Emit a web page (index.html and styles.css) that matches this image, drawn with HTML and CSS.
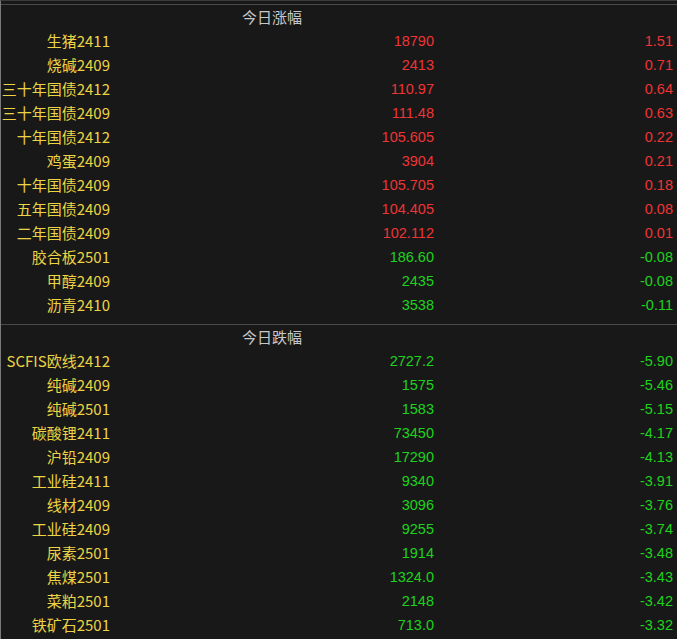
FILE: index.html
```html
<!DOCTYPE html>
<html lang="zh-CN">
<head>
    <meta charset="UTF-8">
    <title>今日涨跌幅</title>
    <link rel="stylesheet" href="styles.css">
</head>
<body>
    <div class="board">
        <div class="section">
            <div class="section-title">今日涨幅</div>
            <div class="row up"><span class="name"><span>生猪2411</span></span><span class="price">18790</span><span class="change">1.51</span></div>
            <div class="row up"><span class="name"><span>烧碱2409</span></span><span class="price">2413</span><span class="change">0.71</span></div>
            <div class="row up"><span class="name"><span>三十年国债2412</span></span><span class="price">110.97</span><span class="change">0.64</span></div>
            <div class="row up"><span class="name"><span>三十年国债2409</span></span><span class="price">111.48</span><span class="change">0.63</span></div>
            <div class="row up"><span class="name"><span>十年国债2412</span></span><span class="price">105.605</span><span class="change">0.22</span></div>
            <div class="row up"><span class="name"><span>鸡蛋2409</span></span><span class="price">3904</span><span class="change">0.21</span></div>
            <div class="row up"><span class="name"><span>十年国债2409</span></span><span class="price">105.705</span><span class="change">0.18</span></div>
            <div class="row up"><span class="name"><span>五年国债2409</span></span><span class="price">104.405</span><span class="change">0.08</span></div>
            <div class="row up"><span class="name"><span>二年国债2409</span></span><span class="price">102.112</span><span class="change">0.01</span></div>
            <div class="row down"><span class="name"><span>胶合板2501</span></span><span class="price">186.60</span><span class="change">-0.08</span></div>
            <div class="row down"><span class="name"><span>甲醇2409</span></span><span class="price">2435</span><span class="change">-0.08</span></div>
            <div class="row down"><span class="name"><span>沥青2410</span></span><span class="price">3538</span><span class="change">-0.11</span></div>
        </div>

        <div class="section">
            <div class="section-title">今日跌幅</div>
            <div class="row down"><span class="name"><span>SCFIS欧线2412</span></span><span class="price">2727.2</span><span class="change">-5.90</span></div>
            <div class="row down"><span class="name"><span>纯碱2409</span></span><span class="price">1575</span><span class="change">-5.46</span></div>
            <div class="row down"><span class="name"><span>纯碱2501</span></span><span class="price">1583</span><span class="change">-5.15</span></div>
            <div class="row down"><span class="name"><span>碳酸锂2411</span></span><span class="price">73450</span><span class="change">-4.17</span></div>
            <div class="row down"><span class="name"><span>沪铅2409</span></span><span class="price">17290</span><span class="change">-4.13</span></div>
            <div class="row down"><span class="name"><span>工业硅2411</span></span><span class="price">9340</span><span class="change">-3.91</span></div>
            <div class="row down"><span class="name"><span>线材2409</span></span><span class="price">3096</span><span class="change">-3.76</span></div>
            <div class="row down"><span class="name"><span>工业硅2409</span></span><span class="price">9255</span><span class="change">-3.74</span></div>
            <div class="row down"><span class="name"><span>尿素2501</span></span><span class="price">1914</span><span class="change">-3.48</span></div>
            <div class="row down"><span class="name"><span>焦煤2501</span></span><span class="price">1324.0</span><span class="change">-3.43</span></div>
            <div class="row down"><span class="name"><span>菜粕2501</span></span><span class="price">2148</span><span class="change">-3.42</span></div>
            <div class="row down"><span class="name"><span>铁矿石2501</span></span><span class="price">713.0</span><span class="change">-3.32</span></div>
        </div>
    </div>
</body>
</html>
```

FILE: styles.css
```css
html, body {
    margin: 0;
    padding: 0;
    background-color: #181818;
}
body {
    height: 639px;
    overflow: hidden;
    border-top: 1px solid #3a3a3a;
    border-left: 1px solid #7a7a7a;
    box-sizing: border-box;
    font-family: "Noto Sans CJK SC", sans-serif;
}
.board {
    padding-top: 3px;
    display: flex;
    flex-direction: column;
    gap: 7px;
}
.section {
    border-top: 1px solid #4a4a4a;
}
.section-title {
    height: 24px;
    line-height: 24px;
    padding-left: 241px;
    color: #c8c8c8;
    font-size: 15px;
}
.row {
    display: grid;
    grid-template-columns: 109px 324px 239px;
    height: 24px;
    line-height: 24px;
}
.name {
    display: flex;
    justify-content: flex-end;
    overflow: hidden;
    white-space: nowrap;
    color: #ecd444;
    font-size: 15px;
}
.price,
.change {
    text-align: right;
    font-family: "Liberation Sans", Arial, sans-serif;
    font-size: 14.5px;
}
.up .price,
.up .change {
    color: #ee3434;
}
.down .price,
.down .change {
    color: #1ed21e;
}
```
